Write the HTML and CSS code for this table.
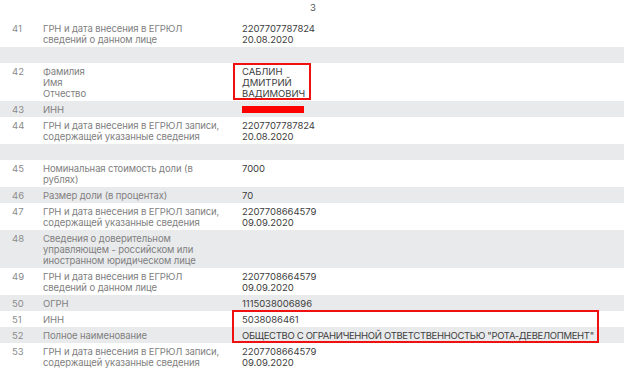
FILE: index.html
```html
<!DOCTYPE html>
<html lang="ru">
<head>
<meta charset="utf-8">
<link rel="stylesheet" href="styles.css">
</head>
<body>
<div class="page-num">3</div>
<table class="egr">
  <colgroup><col class="c-num"><col class="c-label"><col></colgroup>
  <tbody>
    <tr><td class="num">41</td><td class="label">ГРН и дата внесения в ЕГРЮЛ<br>сведений о данном лице</td><td class="val">2207707787824<br>20.08.2020</td></tr>
    <tr class="grey"><td></td><td></td><td>&nbsp;</td></tr>
    <tr><td class="num">42</td><td class="label">Фамилия<br>Имя<br>Отчество</td><td class="val mark"><span class="box box-name"></span>САБЛИН<br>ДМИТРИЙ<br>ВАДИМОВИЧ</td></tr>
    <tr class="grey"><td class="num">43</td><td class="label">ИНН</td><td class="val"><span class="redact"></span></td></tr>
    <tr><td class="num">44</td><td class="label">ГРН и дата внесения в ЕГРЮЛ записи,<br>содержащей указанные сведения</td><td class="val">2207707787824<br>20.08.2020</td></tr>
    <tr class="grey"><td></td><td></td><td>&nbsp;</td></tr>
    <tr><td class="num">45</td><td class="label">Номинальная стоимость доли (в<br>рублях)</td><td class="val">7000</td></tr>
    <tr class="grey"><td class="num">46</td><td class="label">Размер доли (в процентах)</td><td class="val">70</td></tr>
    <tr><td class="num">47</td><td class="label">ГРН и дата внесения в ЕГРЮЛ записи,<br>содержащей указанные сведения</td><td class="val">2207708664579<br>09.09.2020</td></tr>
    <tr class="grey"><td class="num">48</td><td class="label">Сведения о доверительном<br>управляющем - российском или<br>иностранном юридическом лице</td><td class="val"></td></tr>
    <tr><td class="num">49</td><td class="label">ГРН и дата внесения в ЕГРЮЛ<br>сведений о данном лице</td><td class="val">2207708664579<br>09.09.2020</td></tr>
    <tr class="grey"><td class="num">50</td><td class="label">ОГРН</td><td class="val">1115038006896</td></tr>
    <tr><td class="num">51</td><td class="label">ИНН</td><td class="val mark"><span class="box box-org"></span>5038086461</td></tr>
    <tr class="grey"><td class="num">52</td><td class="label">Полное наименование</td><td class="val org">ОБЩЕСТВО С ОГРАНИЧЕННОЙ ОТВЕТСТВЕННОСТЬЮ "РОТА-ДЕВЕЛОПМЕНТ"</td></tr>
    <tr><td class="num">53</td><td class="label">ГРН и дата внесения в ЕГРЮЛ записи,<br>содержащей указанные сведения</td><td class="val">2207708664579<br>09.09.2020</td></tr>
  </tbody>
</table>
</body>
</html>
```
FILE: styles.css
```css
html, body {
  margin: 0;
  padding: 0;
  background: #ffffff;
}
body {
  width: 624px;
  height: 376px;
  overflow: hidden;
  font-family: "Inter", "Noto Sans", sans-serif;
  font-size: 9.5px;
  line-height: 11px;
}
.page-num {
  height: 20px;
  box-sizing: border-box;
  padding: 2px 0 0 310px;
  color: #555;
}
.egr {
  width: 624px;
  border-collapse: collapse;
  table-layout: fixed;
}
.c-num { width: 43px; }
.c-label { width: 199px; }
.egr td {
  padding: 2.5px 0;
  vertical-align: top;
  white-space: nowrap;
}
.egr tr.grey td {
  background: #e9eaec;
}
.num {
  padding-left: 12px !important;
  color: #8a8a8a;
}
.label {
  color: #808080;
  letter-spacing: -0.1px;
}
.val {
  color: #404040;
  letter-spacing: -0.05px;
}
.org {
  letter-spacing: -0.32px;
}
.mark {
  position: relative;
}
.box {
  position: absolute;
  border: 2px solid #f01010;
  box-sizing: border-box;
}
.box-name {
  left: -9px;
  top: 0;
  width: 78px;
  height: 37px;
}
.box-org {
  left: -10px;
  top: -1px;
  width: 367px;
  height: 33px;
}
.redact {
  display: inline-block;
  width: 62px;
  height: 7px;
  margin-top: 2px;
  background: #ff0000;
  vertical-align: top;
}
```
